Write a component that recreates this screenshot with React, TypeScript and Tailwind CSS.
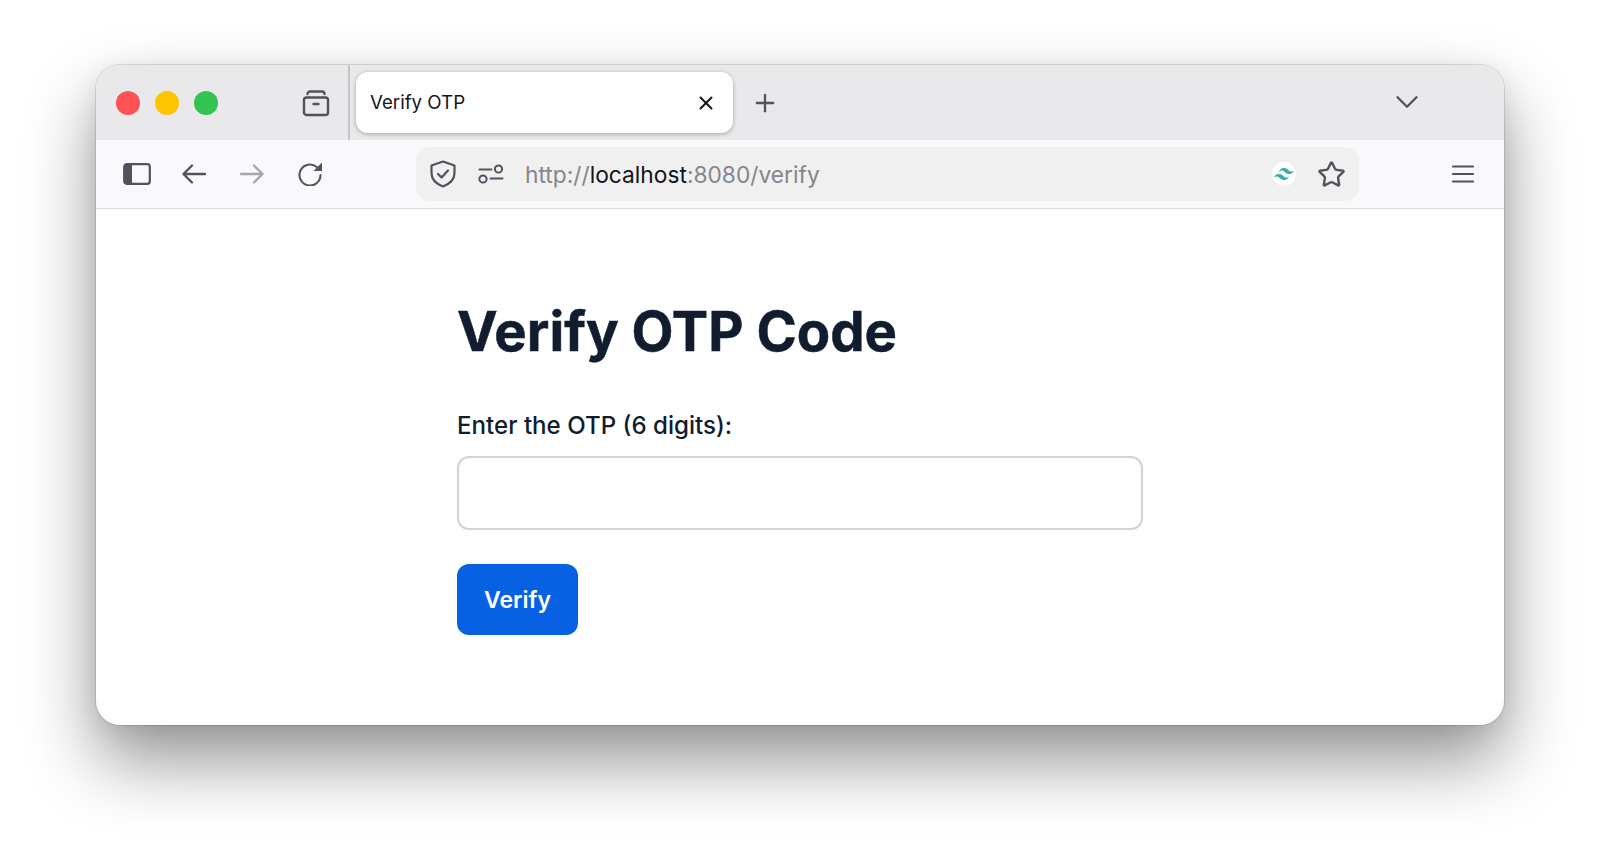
import { Plus, X, ChevronDown, Star } from 'lucide-react';

const SANS = 'font-["Inter",sans-serif]';

function ArchiveIcon() {
  return (
    <svg width="28" height="28" viewBox="0 0 28 28" fill="none" stroke="#52525e" strokeWidth="2.4" strokeLinecap="round" strokeLinejoin="round">
      <path d="M5.5 5A2.5 2.5 0 0 1 8 2.5h12A2.5 2.5 0 0 1 22.5 5" />
      <rect x="2" y="8.5" width="24" height="17.5" rx="2.5" />
      <path d="M11.5 15h5" />
    </svg>
  );
}

function SidebarIcon() {
  return (
    <svg width="28" height="22" viewBox="0 0 28 22" fill="none">
      <rect x="1.2" y="1.2" width="25.6" height="19.6" rx="2.5" stroke="#52525e" strokeWidth="2.2" />
      <path d="M3 1.5h6v19H3a1.5 1.5 0 0 1-1.5-1.5V3A1.5 1.5 0 0 1 3 1.5z" fill="#52525e" />
    </svg>
  );
}

function BackArrow() {
  return (
    <svg width="24" height="20" viewBox="0 0 24 20" fill="none" stroke="#52525e" strokeWidth="2.3" strokeLinecap="round" strokeLinejoin="round">
      <path d="M23 10H1.5M10 1.5 1.5 10l8.5 8.5" />
    </svg>
  );
}

function ForwardArrow() {
  return (
    <svg width="24" height="20" viewBox="0 0 24 20" fill="none" stroke="#a5a5ab" strokeWidth="2.3" strokeLinecap="round" strokeLinejoin="round">
      <path d="M1 10h21.5M14 1.5l8.5 8.5-8.5 8.5" />
    </svg>
  );
}

function ReloadIcon() {
  return (
    <svg width="24" height="24" viewBox="0 0 24 24" fill="none">
      <path d="M18.8 5A10.5 10.5 0 1 0 22.5 13" stroke="#52525e" strokeWidth="2.1" strokeLinecap="round" />
      <path d="M24 .5V9h-8.5z" fill="#52525e" />
    </svg>
  );
}

function ShieldIcon() {
  return (
    <svg width="26" height="28" viewBox="0 0 26 28" fill="none" stroke="#52525e" strokeWidth="2.2" strokeLinecap="round" strokeLinejoin="round">
      <path d="M13 1.5 24.5 5.5V13c0 6.5-4.5 10.8-11.5 13.5C6 23.8 1.5 19.5 1.5 13V5.5z" />
      <path d="m8 14 3.6 3.4L18 10.5" />
    </svg>
  );
}

function SettingsIcon() {
  return (
    <svg width="26" height="20" viewBox="0 0 26 20" fill="none" stroke="#52525e" strokeWidth="2" strokeLinecap="round">
      <path d="M1.5 5.5h12" />
      <circle cx="20.5" cy="5" r="3.6" />
      <path d="M12.5 14.5h12" />
      <circle cx="5" cy="15" r="3.6" />
    </svg>
  );
}

function TailwindBadge() {
  return (
    <div className="flex h-6 w-6 items-center justify-center rounded-full bg-white">
      <svg width="20" height="20" viewBox="0 0 24 24" fill="#38a9ad">
        <path d="M12.001 4.8c-3.2 0-5.2 1.6-6 4.8 1.2-1.6 2.6-2.2 4.2-1.8.913.228 1.565.89 2.288 1.624C13.666 10.618 15.027 12 18.001 12c3.2 0 5.2-1.6 6-4.8-1.2 1.6-2.6 2.2-4.2 1.8-.913-.228-1.565-.89-2.288-1.624C16.337 6.182 14.976 4.8 12.001 4.8zm-6 7.2c-3.2 0-5.2 1.6-6 4.8 1.2-1.6 2.6-2.2 4.2-1.8.913.228 1.565.89 2.288 1.624 1.177 1.194 2.538 2.576 5.512 2.576 3.2 0 5.2-1.6 6-4.8-1.2 1.6-2.6 2.2-4.2 1.8-.913-.228-1.565-.89-2.288-1.624C10.337 13.382 8.976 12 6.001 12z" />
      </svg>
    </div>
  );
}

function MenuIcon() {
  return (
    <svg width="22" height="18" viewBox="0 0 22 18" fill="none" stroke="#52525e" strokeWidth="2.1" strokeLinecap="round">
      <path d="M1 1.5h20M1 9h20M1 16.5h20" />
    </svg>
  );
}

export default function App() {
  return (
    <div className={`h-[851px] overflow-hidden bg-white pl-[96px] pt-[65px] ${SANS}`}>
      <div className="flex h-[660px] w-[1408px] flex-col overflow-hidden rounded-[24px] bg-white shadow-[0_0_0_1px_rgba(0,0,0,0.11),0_36px_70px_rgba(0,0,0,0.42),0_4px_24px_rgba(0,0,0,0.08)]">
        {/* Tab strip */}
        <div className="flex h-[75px] shrink-0 items-center bg-[#e9e9eb]">
          <div className="ml-[20px] flex gap-[15px]">
            <span className="h-6 w-6 rounded-full bg-[#ff5257]" />
            <span className="h-6 w-6 rounded-full bg-[#fdc500]" />
            <span className="h-6 w-6 rounded-full bg-[#32c452]" />
          </div>
          <div className="ml-[84px]">
            <ArchiveIcon />
          </div>
          <div className="ml-[18px] w-[2px] self-stretch bg-[#c4c4c8]" />
          <div className="ml-[6px] flex h-[61px] w-[377px] items-center justify-between rounded-[12px] bg-white pl-[14px] pr-[16px] shadow-[0_1px_4px_rgba(0,0,0,0.3)]">
            <span className="pt-[2px] text-[18.7px] text-[#15141a]">Verify OTP</span>
            <X size={22} strokeWidth={2.2} className="text-[#15141a]" />
          </div>
          <Plus size={28} strokeWidth={2} className="ml-[18px] text-[#52525e]" />
          <ChevronDown size={38} strokeWidth={1.5} className="mb-[2px] ml-[609px] text-[#52525e]" />
        </div>

        {/* Toolbar */}
        <div className="flex h-[69px] shrink-0 items-center border-b border-[#dcdce0] bg-[#f9f9fb]">
          <div className="ml-[27px]">
            <SidebarIcon />
          </div>
          <div className="ml-[31px]">
            <BackArrow />
          </div>
          <div className="ml-[34px]">
            <ForwardArrow />
          </div>
          <div className="ml-[34px]">
            <ReloadIcon />
          </div>
          <div className="ml-[94px] flex h-[54px] w-[943px] items-center rounded-[14px] bg-[#f0f0f1]">
            <div className="ml-[14px]">
              <ShieldIcon />
            </div>
            <div className="ml-[22px]">
              <SettingsIcon />
            </div>
            <span className="ml-[21px] pt-[2px] text-[22.75px] text-[#85858b]">
              http://<span className="text-[#15141a]">localhost</span>:8080/verify
            </span>
            <div className="ml-auto">
              <TailwindBadge />
            </div>
            <Star size={29} strokeWidth={2} className="ml-[21px] mr-[13px] text-[#52525e]" />
          </div>
          <div className="ml-[93px]">
            <MenuIcon />
          </div>
        </div>

        {/* Page content */}
        <div className="flex flex-1 flex-col items-start pl-[361px] pt-[87px]">
          <h1 className="text-[54.5px] font-bold leading-[70px] text-[#111c2e] [-webkit-text-stroke:0.5px_#111c2e]">Verify OTP Code</h1>
          <label className="mt-[44px] text-[24.1px] font-medium leading-[32px] text-[#111c2e]">Enter the OTP (6 digits):</label>
          <input className="mt-[14px] h-[74px] w-[686px] rounded-[12px] border-2 border-[#d1d1db] bg-white" />
          <button className="mt-[34px] flex h-[71px] w-[121px] items-center justify-center rounded-[12px] bg-[#0860e2] pt-[2px] text-[23px] font-semibold text-white">
            Verify
          </button>
        </div>
      </div>
    </div>
  );
}
